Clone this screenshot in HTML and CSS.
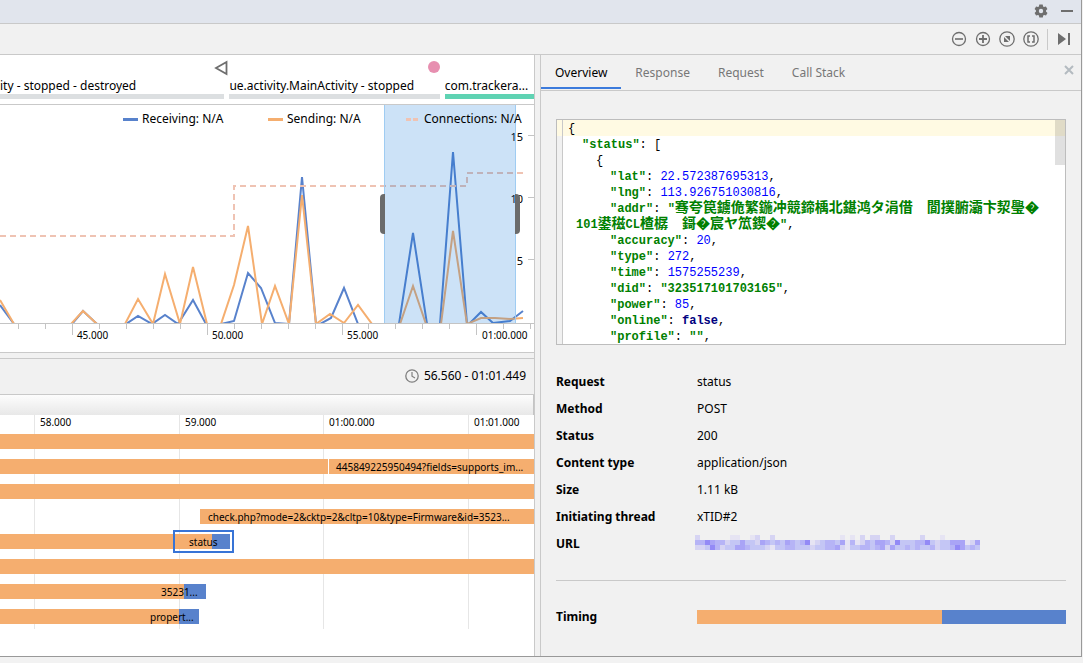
FILE: index.html
```html
<!DOCTYPE html>
<html lang="en">
<head>
  <meta charset="UTF-8">
  <meta name="viewport" content="width=device-width, initial-scale=1.0">
  <title>Network Profiler</title>
  <link rel="stylesheet" href="styles.css">
</head>
<body>
  <div class="window">
    <header class="titlebar">
      <button class="icon-btn" aria-label="Settings">
        <svg width="14" height="14" viewBox="0 0 14 14"><path fill="#6e6e6e" fill-rule="evenodd" d="M5.300.6h3.400l.4 2 .9.5 1.900-.7 1.500 2.700L12 6.500v1l1.500 1.400-1.500 2.700-1.900-.7-.9.500-.4 2H5.300l-.4-2-.9-.5-1.900.7L.6 8.900 2 7.500v-1L.6 5.100l1.500-2.700 1.900.7.9-.5zM7 4.800a2.200 2.200 0 1 0 0 4.400 2.200 2.200 0 0 0 0-4.400z"/></svg>
      </button>
      <button class="icon-btn" aria-label="Hide">
        <svg width="14" height="14" viewBox="0 0 14 14"><path fill="#6e6e6e" d="M1 6h12v2H1z"/></svg>
      </button>
    </header>

    <div class="toolbar">
      <button class="icon-btn" aria-label="Zoom out">
        <svg width="16" height="16" viewBox="0 0 16 16" fill="none" stroke="#6e6e6e"><circle cx="8" cy="8" r="6.500" stroke-width="1.300"/><path stroke-width="1.600" d="M4 8h8"/></svg>
      </button>
      <button class="icon-btn" aria-label="Zoom in">
        <svg width="16" height="16" viewBox="0 0 16 16" fill="none" stroke="#6e6e6e"><circle cx="8" cy="8" r="6.500" stroke-width="1.300"/><path stroke-width="1.800" d="M4 8h8M8 4v8"/></svg>
      </button>
      <button class="icon-btn" aria-label="Reset zoom">
        <svg width="16" height="16" viewBox="0 0 16 16"><circle cx="8" cy="8" r="7.200" fill="none" stroke="#6e6e6e" stroke-width="1.300"/><path fill="#6e6e6e" d="M6 5h5v5zM5 6v5h5z"/></svg>
      </button>
      <button class="icon-btn" aria-label="Zoom to selection">
        <svg width="16" height="16" viewBox="0 0 16 16" fill="none" stroke="#6e6e6e"><circle cx="8" cy="8" r="7.200" stroke-width="1.300"/><path stroke-width="1.500" d="M7 5H5v6h2M9 5h2v6H9"/></svg>
      </button>
      <span class="toolbar-sep"></span>
      <button class="icon-btn" aria-label="Go live">
        <svg width="16" height="16" viewBox="0 0 16 16" fill="#6e6e6e"><path d="M2 2v12l8-6zM12 2h2v12h-2z"/></svg>
      </button>
    </div>

    <div class="content">
      <main class="monitor">
        <section class="events">
          <svg class="marker back" width="14" height="16" viewBox="0 0 14 16"><path fill="none" stroke="#6e6e6e" stroke-width="1.800" d="M12.500 2v12L2 8z"/></svg>
          <span class="marker touch"></span>
          <div class="activity stopped"><span>ity - stopped - destroyed</span></div>
          <div class="activity stopped"><span>ue.activity.MainActivity - stopped</span></div>
          <div class="activity running"><span>com.trackera...</span></div>
        </section>

        <section class="chart">
          <svg class="plot" viewBox="0 0 534 247" preserveAspectRatio="none">
            <g class="axis">
              <path d="M0 218.500H534"/>
              <path d="M18.500 219v5M45.500 219v5M72.500 219v11M99.500 219v5M126.500 219v5M153.500 219v5M180.500 219v5M207.500 219v11M234.500 219v5M261.500 219v5M288.500 219v5M315.500 219v5M342.500 219v11M368.500 219v5M395.500 219v5M422.500 219v5M449.500 219v5M476.500 219v11M503.500 219v5M530.500 219v5"/>
              <path d="M528 30.500h6M528 92.500h6M528 154.500h6"/>
            </g>
            <svg width="534" height="218" viewBox="0 0 534 218" preserveAspectRatio="none">
              <polyline class="receiving" points="0,200 14,219 72,219 83,206 97,219 126,219 138,211 152,219 165,210 178,219 193,195 206,219 221,219 234,216 248,168 261,183 275,218 289,219 302,72 316,219 320,219 331,213 344,183 358,219 399,219 413,128 427,219 440,219 453,47 467,219 469,219 481,207 493,218 510,216 523,206"/>
              <polyline class="sending" points="0,195 14,219 71,219 83,206 97,219 125,219 138,194 153,219 165,169 180,219 193,162 207,219 221,219 234,180 248,121 262,219 275,181 289,219 302,90 316,219 330,209 344,218 358,200 372,219 400,219 413,181 426,219 441,219 453,126 467,219 481,213 495,213 510,214 523,213"/>
              <polyline class="connections" points="0,131 234,131 234,81 467,81 467,68 523,68"/>
            </svg>
          </svg>
          <div class="y-labels"><span>15</span><span>10</span><span>5</span></div>
          <div class="selection"><i></i><i></i></div>
          <ul class="legend">
            <li><i class="key blue"></i>Receiving: N/A</li>
            <li><i class="key orange"></i>Sending: N/A</li>
            <li><i class="key dashed"></i>Connections: N/A</li>
          </ul>
          <div class="x-labels">
            <span>45.000</span><span>50.000</span><span>55.000</span><span>01:00.000</span>
          </div>
        </section>

        <div class="range">
          <svg width="14" height="14" viewBox="0 0 14 14" fill="none" stroke="#7f7f7f"><circle cx="7" cy="7" r="6.200" stroke-width="1.300"/><path stroke-width="1.200" d="M7 3v4.200l3 1.800"/></svg>
          <span>56.560 - 01:01.449</span>
        </div>

        <section class="requests">
          <div class="requests-head"></div>
          <div class="timeline">
            <div class="grid-col"></div>
            <div class="grid-col">58.000</div>
            <div class="grid-col">59.000</div>
            <div class="grid-col">01:00.000</div>
            <div class="grid-col">01:01.000</div>
          </div>
          <div class="rows" id="rows"></div>
        </section>
      </main>

      <aside class="details">
        <nav class="tabs">
          <button class="tab active">Overview</button>
          <button class="tab">Response</button>
          <button class="tab">Request</button>
          <button class="tab">Call Stack</button>
          <button class="close" aria-label="Close">
            <svg width="10" height="10" viewBox="0 0 10 10"><path stroke="#b4bbc0" stroke-width="2" d="M1 1l8 8M9 1L1 9"/></svg>
          </button>
        </nav>

        <div class="overview">
          <div class="editor">
            <div class="gutter"></div>
            <div class="code">
              <div class="line current">{</div>
              <div class="line in1"><b>"status"</b>: [</div>
              <div class="line in2">{</div>
              <div class="line in3"><b>"lat"</b>: <em>22.572387695313</em>,</div>
              <div class="line in3"><b>"lng"</b>: <em>113.926751030816</em>,</div>
              <div class="line in3"><b>"addr"</b>: <b>"<span class="cjk">骞夸笢鐪佹繁鍦冲競鍗楀北鍖鸿タ涓借　閬撲腑灞卞洯璺�</span></b></div>
              <div class="line wrapped"><b>101<span class="cjk">鍙稵</span>CL<span class="cjk">楂樼　鎶�宸ヤ笟鍥�</span>"</b>,</div>
              <div class="line in3"><b>"accuracy"</b>: <em>20</em>,</div>
              <div class="line in3"><b>"type"</b>: <em>272</em>,</div>
              <div class="line in3"><b>"time"</b>: <em>1575255239</em>,</div>
              <div class="line in3"><b>"did"</b>: <b>"323517101703165"</b>,</div>
              <div class="line in3"><b>"power"</b>: <em>85</em>,</div>
              <div class="line in3"><b>"online"</b>: <strong>false</strong>,</div>
              <div class="line in3"><b>"profile"</b>: <b>""</b>,</div>
            </div>
            <div class="scroll-thumb"></div>
          </div>

          <dl class="fields">
            <dt>Request</dt><dd>status</dd>
            <dt>Method</dt><dd>POST</dd>
            <dt>Status</dt><dd>200</dd>
            <dt>Content type</dt><dd>application/json</dd>
            <dt>Size</dt><dd>1.11 kB</dd>
            <dt>Initiating thread</dt><dd>xTID#2</dd>
            <dt>URL</dt><dd><svg class="masked" id="masked" width="285" height="17" role="img" aria-label="Hidden URL"></svg></dd>
          </dl>

          <div class="timing">
            <span class="timing-label">Timing</span>
            <div class="timing-bar"><i class="sent"></i><i class="received"></i></div>
          </div>
        </div>
      </aside>
    </div>
  </div>
  <footer class="statusbar"></footer>

  <script src="script.js"></script>
</body>
</html>
```
FILE: styles.css
```css
* { box-sizing: border-box; margin: 0; padding: 0; }
body {
  display: flex;
  flex-direction: column;
  height: 100vh;
  overflow: hidden;
  background: #f1f1f1;
  color: #000;
  font: 12px/16px "Noto Sans", "Open Sans", sans-serif;
}
button {
  border: none;
  background: none;
  font: inherit;
  cursor: pointer;
}
svg { display: block; }
ul { list-style: none; }

.window {
  flex: 1;
  min-height: 0;
  display: flex;
  flex-direction: column;
  margin-right: 1px;
  border-right: 1px solid #999;
  border-bottom: 1px solid #999;
}
.titlebar {
  display: flex;
  justify-content: flex-end;
  align-items: center;
  gap: 12px;
  height: 24px;
  padding: 0 7px 1px 0;
  background: #e1e5ed;
  border-bottom: 1px solid #c9c9c9;
}
.toolbar {
  display: flex;
  justify-content: flex-end;
  align-items: center;
  gap: 8px;
  height: 31px;
  padding-right: 9px;
  border-bottom: 1px solid #c9c9c9;
}
.toolbar-sep {
  width: 1px;
  height: 21px;
  background: #c9c9c9;
}

.content {
  flex: 1;
  min-height: 0;
  display: grid;
  grid-template-columns: minmax(0, 535fr) minmax(0, 541fr);
  gap: 5px;
}
.monitor {
  display: flex;
  flex-direction: column;
  border-right: 1px solid #c9c9c9;
}

/* activity strip */
.events {
  position: relative;
  display: grid;
  grid-template-columns: 224fr 210fr 89fr;
  gap: 5px;
  height: 50px;
  background: #fff;
  border-bottom: 1px solid #c9c9c9;
}
.activity {
  align-self: end;
  margin-bottom: 5px;
  white-space: nowrap;
  overflow: hidden;
  border-bottom: 5px solid #dcdfe1;
}
.activity.running { border-color: #5fd3b3; }
.marker { position: absolute; }
.back { left: 40%; top: 5px; }
.touch {
  left: 80.2%;
  top: 6px;
  width: 12px;
  height: 12px;
  border-radius: 50%;
  background: #e78fb0;
}

/* traffic chart */
.chart {
  position: relative;
  height: 248px;
  background: #fff;
  border-bottom: 1px solid #c9c9c9;
}
.plot {
  width: 100%;
  height: 247px;
}
.axis { stroke: #c4c4c4; fill: none; }
.plot polyline { fill: none; stroke-width: 2; }
.receiving { stroke: #5882cc; }
.sending { stroke: #f5ae6f; }
.connections { stroke: #efc3b3; stroke-dasharray: 6 4; }
.legend {
  position: absolute;
  top: 6px;
  right: 9px;
  display: grid;
  grid-template-columns: 145px 138px 119px;
}
.legend li { display: flex; align-items: center; }
.key {
  width: 15px;
  height: 3px;
  margin-right: 4px;
  background: #5882cc;
}
.key.orange { background: #f5ae6f; }
.key.dashed {
  width: 12px;
  margin-right: 6px;
  background: linear-gradient(90deg, #efc3b3 5px, transparent 5px 7px, #efc3b3 7px);
}
.y-labels {
  position: absolute;
  top: 24px;
  right: 11px;
  display: grid;
  grid-auto-rows: 62px;
  font-size: 11px;
  text-align: right;
}
.selection {
  position: absolute;
  top: 0;
  left: 71.9%;
  width: 24.8%;
  height: 218px;
  display: flex;
  justify-content: space-between;
  align-items: center;
  background: rgba(0, 112, 214, 0.2);
  border: solid #9fccf2;
  border-width: 0 1px;
}
.selection i {
  width: 5px;
  height: 40px;
  margin: 0 -5px;
  border-radius: 4px 0 0 4px;
  background: #6b6b6b;
}
.selection i:last-child { border-radius: 0 4px 4px 0; }
.x-labels {
  position: absolute;
  top: 222px;
  left: 14.4%;
  right: 0;
  display: grid;
  grid-template-columns: 135fr 135fr 135fr 52fr;
  font-size: 10px;
}

.range {
  display: flex;
  justify-content: flex-end;
  align-items: center;
  gap: 5px;
  height: 37px;
  margin-top: 5px;
  padding: 0 8px 2px 0;
  border: solid #c9c9c9;
  border-width: 1px 0;
}

/* request rows */
.requests {
  position: relative;
  flex: 1;
  background: #fff;
}
.requests-head {
  height: 20px;
  background: linear-gradient(#fdfdfd, #e8e8e8);
  border-right: 1px solid #c4c4c4;
}
.timeline {
  display: grid;
  grid-template-columns: 34fr 145fr 144fr 145fr 66fr;
  height: 214px;
  font-size: 10px;
  line-height: 14px;
}
.grid-col + .grid-col {
  padding-left: 5px;
  border-left: 1px solid #e6e6e6;
}
.rows {
  position: absolute;
  top: 34px;
  left: 0;
  right: 0;
}
.row {
  position: relative;
  height: 25px;
}
.bar {
  position: absolute;
  top: 5px;
  height: 15px;
  background: #f5ae6f;
}
.bar.in { background: #5882cc; }
.bar.split { border-left: 1px solid #fff; }
.bar-label {
  position: absolute;
  top: 5px;
  font-size: 10px;
  line-height: 16px;
  white-space: nowrap;
}
.bar-frame {
  position: absolute;
  top: 1px;
  height: 23px;
  border: 2px solid #3874d6;
}

/* details pane */
.details {
  display: flex;
  flex-direction: column;
  border-left: 1px solid #c9c9c9;
}
.tabs {
  display: flex;
  height: 36px;
  border-bottom: 1px solid #c9c9c9;
}
.tab {
  height: 34px;
  padding: 4px 14px 0;
  border-bottom: 2px solid transparent;
  color: #777;
}
.tab.active {
  color: #000;
  border-color: #3c7bdc;
}
.close {
  margin: 0 7px 5px auto;
}
.overview {
  padding: 28px 15px 0;
}
.editor {
  position: relative;
  display: flex;
  height: 226px;
  overflow: hidden;
  background: #fff;
  border: 1px solid #bdbdbd;
}
.gutter {
  width: 6px;
  background: linear-gradient(#fffae3 16px, #f1f1f1 16px);
  border-right: 1px solid #c9c9c9;
}
.code {
  flex: 1;
  font: 12px/18px "Liberation Mono", "Noto Sans CJK SC", monospace;
}
.line {
  height: 16px;
  padding-left: 5px;
  white-space: pre;
}
.current { background: #fffae3; }
.in1 { padding-left: 19px; }
.in2 { padding-left: 33px; }
.in3 { padding-left: 47px; }
.wrapped { padding-left: 13px; }
.line b { color: #008000; }
.line em { color: #00f; font-style: normal; }
.line strong { color: #000080; }
.cjk {
  font-family: "Noto Sans CJK SC", sans-serif;
  font-size: 14px;
  line-height: 0;
}
.scroll-thumb {
  position: absolute;
  top: 0;
  right: 0;
  width: 10px;
  height: 45px;
  background: rgba(0, 0, 0, 0.12);
}
.fields {
  display: grid;
  grid-template-columns: 141px 1fr;
  grid-auto-rows: 27px;
  align-items: center;
  margin-top: 23px;
  height: 213px;
  border-bottom: 1px solid #c9c9c9;
}
.fields dt, .timing-label {
  font-weight: bold;
}
.masked { margin-left: -2px; }
.timing {
  display: flex;
  align-items: center;
  margin-top: 28px;
}
.timing-label { width: 141px; }
.timing-bar {
  flex: 1;
  display: flex;
  height: 14px;
}
.sent { flex: 245; background: #f5ae6f; }
.received { flex: 124; background: #5882cc; }

.statusbar { height: 6px; background: #f2f2f2; }
```
FILE: script.js
```js
// bar positions on a 534 unit wide time scale
const SCALE = 534;
const requests = [
  { bars: [[0, 534]] },
  { bars: [[0, 328], [328, 534, 'split']], label: '445849225950494?fields=supports_im...', at: 336 },
  { bars: [[0, 534]] },
  { bars: [[200, 534]], label: 'check.php?mode=2&cktp=2&cltp=10&type=Firmware&id=3523...', at: 208 },
  { bars: [[0, 212], [212, 230, 'in']], label: 'status', at: 189, frame: [173, 234] },
  { bars: [[0, 534]] },
  { bars: [[0, 184], [184, 206, 'in']], label: '35231...', at: 161 },
  { bars: [[0, 179], [179, 199, 'in']], label: 'propert...', at: 150 }
];

const pct = (n) => (n / SCALE * 100) + '%';

function addBox(row, cls, from, to) {
  const el = document.createElement('div');
  el.className = cls;
  el.style.left = pct(from);
  if (to) el.style.width = pct(to - from);
  row.appendChild(el);
  return el;
}

requests.forEach((req) => {
  const row = document.createElement('div');
  row.className = 'row';
  req.bars.forEach(([from, to, kind = '']) => addBox(row, 'bar ' + kind, from, to));
  if (req.frame) addBox(row, 'bar-frame', ...req.frame);
  if (req.label) addBox(row, 'bar-label', req.at).textContent = req.label;
  document.getElementById('rows').appendChild(row);
});

// hidden url, one character per 5px cell
const tones = { a: '#e6e4f3', b: '#d6d4f3', c: '#c4c6f5', d: '#b6b4f6', e: '#a9a4f6', f: '#938af6' };
const cells = [
  'b......aa..ab..b.............a.a.b.bb..b.....b...a.......',
  'ddfeddbcceccbedcdcedcdfabcddceadabdceedbfcccddfcbcceeeabe',
  'bbcfdbcceedcccbaccddcccbccddebaccddcdebeccdcdccdbccdfecdc'
];
const svg = document.getElementById('masked');
cells.forEach((line, y) => {
  [...line].forEach((ch, x) => {
    if (!tones[ch]) return;
    const rect = document.createElementNS('http://www.w3.org/2000/svg', 'rect');
    rect.setAttribute('x', x * 5);
    rect.setAttribute('y', y * 5);
    rect.setAttribute('width', 5);
    rect.setAttribute('height', 5);
    rect.setAttribute('fill', tones[ch]);
    svg.appendChild(rect);
  });
});
```
